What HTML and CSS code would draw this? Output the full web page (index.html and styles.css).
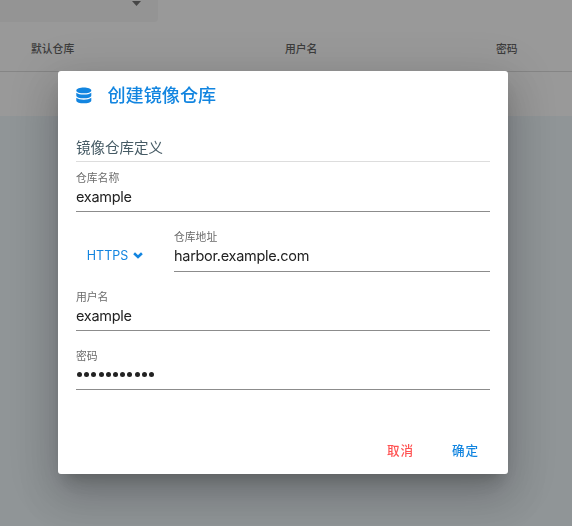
FILE: index.html
```html
<!DOCTYPE html>
<html lang="zh-CN">
<head>
<meta charset="utf-8">
<title>创建镜像仓库</title>
<link rel="stylesheet" href="styles.css">
</head>
<body>
<main class="page">
  <section class="panel">
    <div class="select"><span class="caret"></span></div>
    <div class="table-head">
      <span>默认仓库</span><span>用户名</span><span>密码</span>
    </div>
  </section>
</main>
<div class="overlay">
  <form class="dialog" role="dialog">
    <header class="title">
      <svg class="db" viewBox="0 0 16 17"><path d="M0.3 3.4C.3-.5 15.3-.5 15.3 3.4S.3 7.3.3 3.4Z"/><path d="M.3 5.7C3.2 8.2 12.4 8.2 15.3 5.7V8.5C15.3 12.3.3 12.3.3 8.5Z"/><path d="M.3 10.8C3.2 13.3 12.4 13.3 15.3 10.8V13.4C15.3 17.3 .3 17.3 .3 13.4Z"/></svg>
      <h1>创建镜像仓库</h1>
    </header>
    <h2 class="subhead">镜像仓库定义</h2>
    <div class="field first"><label>仓库名称</label><div class="value">example</div></div>
    <div class="row">
      <button type="button" class="protocol"><span>HTTPS</span><svg viewBox="0 0 10 7"><path d="M1.1 1.2 5 4.9 8.9 1.2"/></svg></button>
      <div class="field"><label>仓库地址</label><div class="value">harbor.example.com</div></div>
    </div>
    <div class="field"><label>用户名</label><div class="value">example</div></div>
    <div class="field"><label>密码</label><div class="value dots"><i></i><i></i><i></i><i></i><i></i><i></i><i></i><i></i><i></i><i></i><i></i></div></div>
    <footer class="actions"><button type="button" class="cancel">取消</button><button type="button" class="ok">确定</button></footer>
  </form>
</div>
</body>
</html>
```
FILE: styles.css
```css
* { box-sizing: border-box; }
body {
  margin: 0;
  height: 526px;
  overflow: hidden;
  background: #eef7fc;
  font-family: Inter, "Noto Sans CJK SC", sans-serif;
}
.panel { height: 116px; background: #fff; }
.select {
  width: 158px;
  height: 22px;
  padding: 1px 17px 0 0;
  display: flex;
  justify-content: flex-end;
  background: #f5f5f5;
  border-radius: 0 0 4px 0;
}
.caret {
  width: 9px;
  height: 5px;
  background: #666;
  clip-path: polygon(0 0, 100% 0, 50% 100%);
}
.table-head {
  height: 50px;
  padding: 3px 0 0 31px;
  display: grid;
  grid-template-columns: 254px 211px 1fr;
  align-items: center;
  border-bottom: 1px solid #dadada;
  font-size: 10.8px;
  font-weight: 500;
  color: #555;
}
.overlay {
  position: fixed;
  inset: 0;
  padding: 71px 0 0 58px;
  background: rgba(33, 33, 33, .46);
}
.dialog {
  width: 450px;
  height: 403px;
  padding: 0 18px;
  display: flex;
  flex-direction: column;
  background: #fff;
  border-radius: 3px;
  box-shadow: 0 11px 15px -7px rgba(0,0,0,.2), 0 24px 38px 3px rgba(0,0,0,.14), 0 9px 46px 8px rgba(0,0,0,.12);
}
.title {
  height: 65px;
  padding-top: 11px;
  display: flex;
  align-items: flex-start;
  gap: 15.5px;
  color: #1285e0;
}
.db { width: 16px; height: 17px; margin-top: 5px; fill: currentColor; }
h1 { margin: 0; font-size: 18.1px; line-height: 26px; font-weight: 500; }
.subhead {
  height: 26px;
  margin: 0 0 8px;
  border-bottom: 1px solid #ddd;
  font-size: 14.5px;
  line-height: 24px;
  font-weight: 400;
  color: #455a64;
}
.field {
  height: 42px;
  margin-bottom: 17px;
  flex: none;
  border-bottom: 1px solid #8c8c8c;
}
.field.first { margin-bottom: 18px; }
.field label {
  display: block;
  height: 16px;
  padding-top: 1px;
  font-size: 10.8px;
  line-height: 16px;
  color: #6b6b6b;
}
.value { height: 22px; font-size: 14.5px; line-height: 22px; letter-spacing: -.29px; color: #222; }
.row { display: flex; }
.row .field { flex: 1; }
.row label { padding-top: 0; }
.row .value { line-height: 20px; }
.protocol {
  width: 78px;
  height: 32px;
  margin: 9px 20px 0 0;
  gap: 5px;
  color: #1285e0;
  font-size: 12.5px;
}
button {
  padding: 0;
  display: flex;
  align-items: center;
  justify-content: center;
  border: 0;
  background: none;
  font-family: inherit;
}
.protocol svg { width: 10px; height: 7px; fill: none; stroke: currentColor; stroke-width: 2.6; }
.dots { display: flex; align-items: center; gap: 2.2px; height: 21px; padding-left: 1px; }
.dots i { width: 5px; height: 5px; border-radius: 50%; background: #222; }
.actions { margin-top: 26px; display: flex; justify-content: flex-end; }
.actions button { width: 65px; height: 32px; font-size: 12.6px; font-weight: 500; letter-spacing: .8px; }
.actions .cancel { color: #ff5252; }
.actions .ok { color: #1285e0; margin-right: -8px; }
```
